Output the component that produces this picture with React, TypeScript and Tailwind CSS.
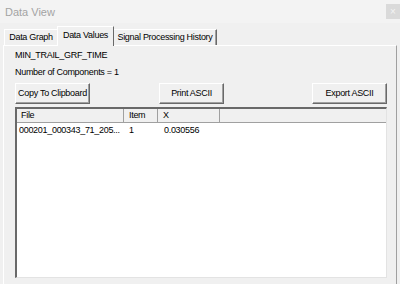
import React from 'react';

const font = { fontFamily: '"Liberation Sans", Arial, sans-serif' };

const rows = [{ file: '000201_000343_71_205...', item: '1', x: '0.030556' }];

function Button({ label, width, className = '' }: { label: string; width: string; className?: string }) {
  return (
    <div
      className={`${width} ${className} h-[21px] shrink-0 flex items-center justify-center whitespace-nowrap bg-[#f0f0f0] border border-t-white border-l-white border-b-[#696969] border-r-[#696969] shadow-[inset_-1px_-1px_0_#a0a0a0] text-[9px] tracking-[-0.3px] text-black`}
    >
      {label}
    </div>
  );
}

export default function App() {
  return (
    <div className="w-[400px] h-[284px] overflow-hidden bg-[#f0f0f0] flex flex-col whitespace-nowrap" style={font}>
      {/* title bar */}
      <div className="h-[23px] bg-[#f3f3f3] flex items-start justify-between">
        <span className="pl-[5px] pt-[4px] text-[11px] text-[#a3a3a3]">Data View</span>
        <div className="mt-[4px] w-[14px] h-[15px] bg-[#dadada] flex items-center justify-center text-[10px] leading-none text-[#f4f4f4]">
          ×
        </div>
      </div>

      {/* tabs */}
      <div className="h-[22px] flex items-end pl-[4px] text-[9px] tracking-[-0.3px] text-black">
        <div className="w-[53px] h-[16px] flex items-center justify-center border-t border-l border-t-white border-l-white">
          Data Graph
        </div>
        <div className="w-[57px] h-[20px] -mb-px relative z-10 bg-[#f0f0f0] flex items-center justify-center pb-[2px] border-t border-l border-r border-t-white border-l-white border-r-[#696969]">
          Data Values
        </div>
        <div className="w-[103px] h-[16px] flex items-center justify-center border-t border-r border-t-white border-r-[#696969] shadow-[inset_-1px_0_0_#a0a0a0]">
          Signal Processing History
        </div>
      </div>

      {/* panel */}
      <div className="mx-[3px] flex-1 border-t border-l border-r border-t-white border-l-white border-r-[#a0a0a0] pl-[11px] pr-[9px] text-[9px] tracking-[-0.3px]">
        <div className="mt-[3px] h-[13px] leading-[13px] text-black">MIN_TRAIL_GRF_TIME</div>
        <div className="mt-[4px] h-[13px] leading-[13px] text-black">Number of Components = 1</div>

        <div className="mt-[4px] flex">
          <Button label="Copy To Clipboard" width="w-[75px]" />
          <Button label="Print ASCII" width="w-[65px]" className="ml-[69px]" />
          <Button label="Export ASCII" width="w-[75px]" className="ml-auto" />
        </div>

        {/* list view */}
        <div className="mt-[3px] h-[171px] bg-white border-t-2 border-l-2 border-t-[#696969] border-l-[#696969] border-b border-r border-b-[#e3e3e3] border-r-[#e3e3e3] flex flex-col">
          <div className="h-[14px] shrink-0 flex bg-[#f0f0f0] border-b border-b-[#a0a0a0] text-black leading-[13px]">
            <div className="w-[107px] shrink-0 pl-[4px] border-r border-r-[#a0a0a0]">File</div>
            <div className="w-[34px] shrink-0 pl-[5px] border-r border-r-[#a0a0a0]">Item</div>
            <div className="w-[62px] shrink-0 pl-[5px] border-r border-r-[#a0a0a0]">X</div>
            <div className="flex-1" />
          </div>
          {rows.map((r, i) => (
            <div key={i} className="h-[14px] mt-[1px] flex text-black leading-[13px]">
              <div className="w-[107px] shrink-0 pl-[2px]">{r.file}</div>
              <div className="w-[34px] shrink-0 pl-[5px]">{r.item}</div>
              <div className="w-[62px] shrink-0 pl-[6px]">{r.x}</div>
            </div>
          ))}
        </div>
      </div>
    </div>
  );
}
